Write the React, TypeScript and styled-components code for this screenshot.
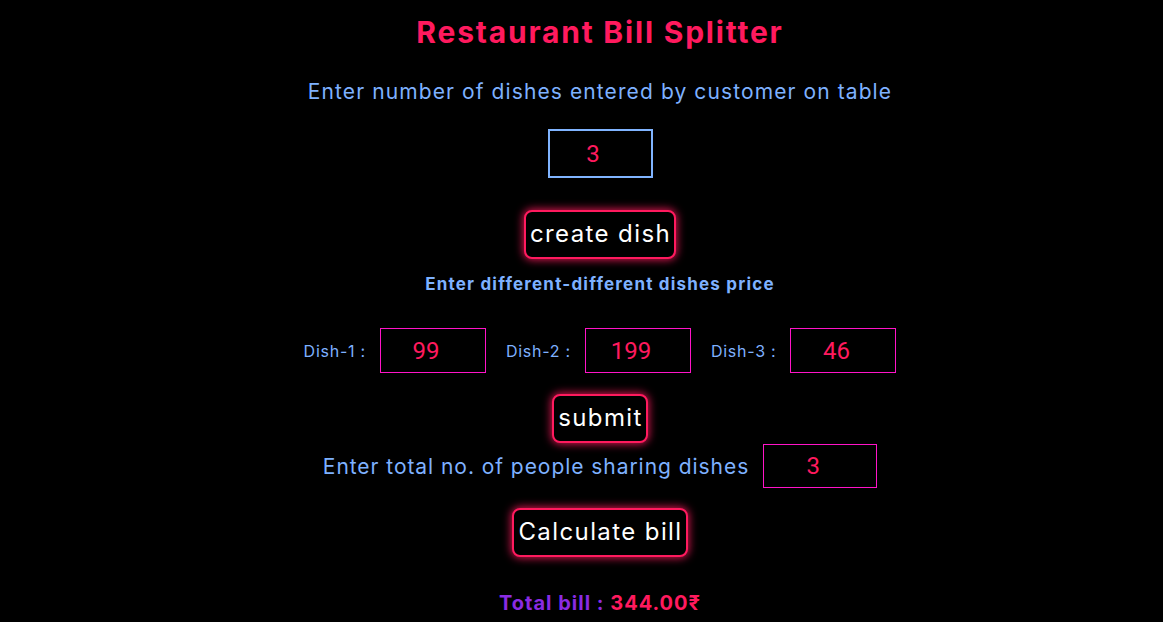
import React from "react";
import styled, { createGlobalStyle } from "styled-components";

const Global = createGlobalStyle`
  html, body { margin: 0; padding: 0; background: #000; }
  body { font-family: Inter, "DejaVu Sans", sans-serif; }
`;

const Page = styled.main`
  display: flex;
  flex-direction: column;
  align-items: center;
  min-height: 622px;
  padding-left: 37px;
  box-sizing: border-box;
  background: #000;
`;

const Title = styled.h1`
  margin: 12px 0 0;
  font-size: 30px;
  line-height: 40px;
  font-weight: 700;
  letter-spacing: 1.8px;
  color: #ff1a5e;
`;

const Prompt = styled.p<{ $size?: number; $bold?: boolean; $mt: number; $lh: number; $ls: number }>`
  margin: ${(p) => p.$mt}px 0 0;
  font-size: ${(p) => p.$size ?? 21}px;
  line-height: ${(p) => p.$lh}px;
  font-weight: ${(p) => (p.$bold ? 700 : 400)};
  letter-spacing: ${(p) => p.$ls}px;
  color: #7eb1ff;
`;

const Field = styled.input<{ $w: number; $h: number; $tone: "blue" | "magenta"; $mt?: number }>`
  box-sizing: border-box;
  width: ${(p) => p.$w}px;
  height: ${(p) => p.$h}px;
  margin-top: ${(p) => p.$mt ?? 0}px;
  background: #000;
  border: ${(p) => (p.$tone === "blue" ? "2px solid #80b4ff" : "1px solid #ff14c8")};
  color: #ff1a5e;
  font-family: Roboto, "Liberation Sans", sans-serif;
  font-size: 24px;
  text-align: center;
  padding: 0 14px 0 0;
  outline: none;
`;

const GlowButton = styled.button<{ $mt: number }>`
  box-sizing: border-box;
  height: 49px;
  margin-top: ${(p) => p.$mt}px;
  padding: 0 3px 2px 4px;
  background: #000;
  color: #fff;
  border: 2px solid #ff1a5e;
  border-radius: 8px;
  box-shadow: 0 0 8px 1px rgba(255, 26, 94, 0.85);
  font-family: Inter, "DejaVu Sans", sans-serif;
  font-size: 24px;
  letter-spacing: 1.4px;
  cursor: pointer;
`;

const Row = styled.div<{ $mt: number; $gap: number }>`
  display: flex;
  align-items: center;
  gap: ${(p) => p.$gap}px;
  margin-top: ${(p) => p.$mt}px;
`;

const DishGroup = styled.div`
  display: flex;
  align-items: center;
  gap: 14px;
`;

const DishLabel = styled.label`
  font-size: 16px;
  letter-spacing: 0.75px;
  color: #7eb1ff;
  white-space: nowrap;
`;

const PeopleLabel = styled.label`
  font-size: 21px;
  letter-spacing: 0.95px;
  color: #7eb1ff;
  white-space: nowrap;
`;

const Total = styled.p`
  margin: 33px 0 0;
  font-size: 20px;
  line-height: 26px;
  font-weight: 700;
  letter-spacing: 1px;
  color: #8a2be2;
`;

const Amount = styled.span`
  color: #ff1a5e;
`;

const dishes = [
  { label: "Dish-1 :", value: "99" },
  { label: "Dish-2 :", value: "199" },
  { label: "Dish-3 :", value: "46" },
];

export default function App() {
  return (
    <>
      <Global />
      <Page>
        <Title>Restaurant Bill Splitter</Title>
        <Prompt $mt={25} $lh={30} $ls={1.1}>Enter number of dishes entered by customer on table</Prompt>
        <Field $w={105} $h={49} $tone="blue" $mt={22} defaultValue="3" />
        <GlowButton $mt={32}>create dish</GlowButton>
        <Prompt $mt={13} $lh={24} $size={17} $bold $ls={1.2}>Enter different-different dishes price</Prompt>
        <Row $mt={32} $gap={20}>
          {dishes.map((d) => (
            <DishGroup key={d.label}>
              <DishLabel>{d.label}</DishLabel>
              <Field $w={106} $h={45} $tone="magenta" defaultValue={d.value} />
            </DishGroup>
          ))}
        </Row>
        <GlowButton $mt={21}>submit</GlowButton>
        <Row $mt={1} $gap={14}>
          <PeopleLabel>Enter total no. of people sharing dishes</PeopleLabel>
          <Field $w={114} $h={44} $tone="magenta" defaultValue="3" />
        </Row>
        <GlowButton $mt={20}>Calculate bill</GlowButton>
        <Total>
          Total bill : <Amount>344.00₹</Amount>
        </Total>
      </Page>
    </>
  );
}
